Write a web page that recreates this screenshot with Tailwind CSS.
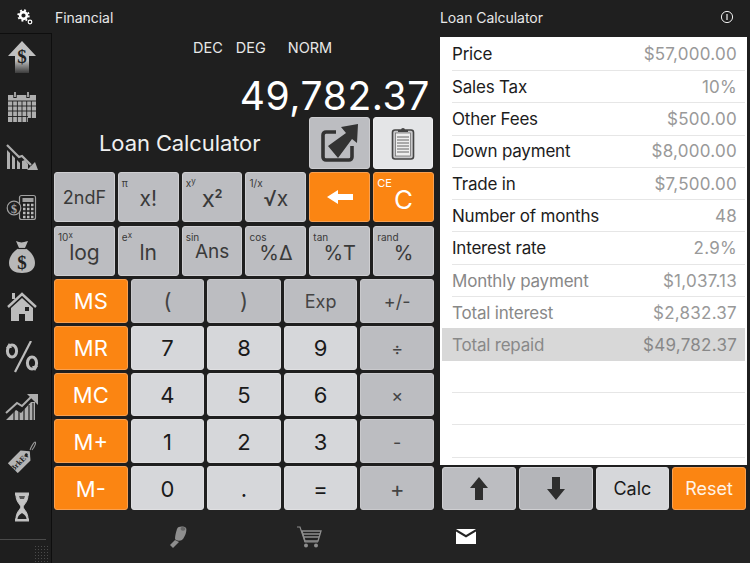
<!DOCTYPE html>
<html><head><meta charset="utf-8"><script src="https://cdn.jsdelivr.net/npm/@tailwindcss/browser@4"></script></head>
<body class="m-0">
<div class="w-[750px] h-[563px] flex flex-col bg-[#1f1f1f] overflow-hidden font-['Inter','Liberation_Sans',sans-serif] text-[#e8e8e8]">
  <!-- header -->
  <div class="h-[34px] flex items-center shrink-0 bg-[#1f1f1f]">
    <div class="w-[55px] flex items-center justify-center pr-[5px] shrink-0">
      <svg width="16" height="16" viewBox="0 0 16 16"><g fill="none" stroke="#fff"><circle cx="6.5" cy="6.5" r="3.4" stroke-width="2.6"/><circle cx="6.5" cy="6.5" r="5.3" stroke-width="1.8" stroke-dasharray="1.9 2.26"/><circle cx="13" cy="13" r="1.8" stroke-width="1.2"/></g></svg>
    </div>
    <div class="w-[385px] text-[14px] tracking-[-0.05px]">Financial</div>
    <div class="flex-1 text-[14px] tracking-[-0.05px]">Loan Calculator</div>
    <svg class="mr-[16px]" width="14" height="14" viewBox="0 0 14 14"><circle cx="7" cy="7" r="5.6" fill="none" stroke="#eee" stroke-width="1"/><path d="M7 4v6" stroke="#eee" stroke-width="1.2"/></svg>
  </div>
  <div class="flex h-[476px] shrink-0">
    <!-- sidebar -->
    <div class="w-[52px] shrink-0 -mt-px border-t border-r border-[#0e0e0e] bg-[#1e1e1e] flex flex-col pt-[7px] gap-[18px] h-[530px] relative z-10">
      <svg width="44" height="32" viewBox="0 0 44 32" class="shrink-0"><defs><linearGradient id="a1" x1="0" x2="0" y1="0" y2="1"><stop offset="0.6" stop-color="#c0c0c0"/><stop offset="1" stop-color="#3c3c3c"/></linearGradient></defs><polygon points="22,0 36,15 29,15 29,32 15,32 15,15 8,15" fill="url(#a1)"/><text x="22" y="22" text-anchor="middle" font-family="Liberation Serif" font-weight="700" font-size="19" fill="#222">$</text></svg>
      <svg width="44" height="32" viewBox="0 0 44 32" class="shrink-0"><path d="M8 4h28v23h-8v4H8z" fill="#aeaeae"/><path d="M8 10h28M8 15h28M8 20h28M8 25.500h20M12.700 10v21M17.400 10v21M22 10v21M26.700 10v21M31.400 10v17" stroke="#1f1f1f" stroke-width="0.9"/><path d="M15 1v6M28 1v6" stroke="#1f1f1f" stroke-width="3.4"/><path d="M15 1v5M28 1v5" stroke="#aaa" stroke-width="1.800"/></svg>
      <svg width="44" height="32" viewBox="0 0 44 32" class="shrink-0"><path d="M7 9l3 3v16H7zM12 14l3 3v11h-3zM17 19l3 3v6h-3zM22 20l3-1 3 4v5h-6zM30 25l2 3h-2z" fill="#aeaeae"/><path d="M7 4l12 12 3-1 9 9" fill="none" stroke="#aeaeae" stroke-width="2.200"/><path d="M38 29H27l8-8z" fill="#aeaeae"/></svg>
      <svg width="44" height="32" viewBox="0 0 44 32" class="shrink-0"><rect x="19.500" y="4.500" width="16" height="24" rx="2" fill="#1f1f1f" stroke="#a0a0a0" stroke-width="1.200"/><rect x="22.500" y="7" width="11" height="4" fill="#a0a0a0"/><path d="M23 14h2.500M27 14h2.500M31 14h2.500M23 18h2.500M27 18h2.500M31 18h2.500M23 22h2.500M27 22h2.500M31 22h2.500M23 26h2.500M27 26h2.500M31 26h2.500" stroke="#bbb" stroke-width="2.500"/><circle cx="14" cy="17" r="6.800" fill="#1f1f1f" stroke="#a0a0a0" stroke-width="1.200"/><text x="14" y="21.500" text-anchor="middle" font-family="Liberation Serif" font-weight="700" font-size="12" fill="#aaa">$</text></svg>
      <svg width="44" height="32" viewBox="0 0 44 32" class="shrink-0"><path d="M16 0c2 1 4 1 5.500 1.500C23 1 25 1 28 0l-3 7c7 4 10 10 10 15 0 7-6 10-13 10S9 29 9 22c0-5 3-11 10-15z" fill="#b8b8b8"/><path d="M18 7.500h8" stroke="#1f1f1f" stroke-width="1.200"/><text x="22" y="28" text-anchor="middle" font-family="Liberation Serif" font-weight="700" font-size="19" fill="#222">$</text></svg>
      <svg width="44" height="32" viewBox="0 0 44 32" class="shrink-0"><path d="M8 16L22 3l14 13" fill="none" stroke="#bcbcbc" stroke-width="2.400"/><rect x="12" y="2" width="3" height="6" fill="#bcbcbc"/><path d="M11 17L22 7l11 10v13h-8v-7h-6v7h-8z" fill="#bcbcbc"/><rect x="25" y="16" width="4" height="4" fill="#1f1f1f"/></svg>
      <svg width="44" height="32" viewBox="0 0 44 32" class="shrink-0"><path d="M31 0L15 31" stroke="#bcbcbc" stroke-width="2.200"/><ellipse cx="12" cy="10" rx="4.600" ry="6" fill="none" stroke="#bcbcbc" stroke-width="3"/><path d="M6 7l3-5 3 5z" fill="#bcbcbc"/><ellipse cx="32" cy="22" rx="4.600" ry="6" fill="none" stroke="#bcbcbc" stroke-width="3"/><path d="M38 25l-3 5-3-5z" fill="#bcbcbc"/></svg>
      <svg width="44" height="32" viewBox="0 0 44 32" class="shrink-0"><path d="M6 29l10-10 5 3 10-11 4 0v18z" fill="#aeaeae"/><path d="M6 24l11-10 5 3 10-10" fill="none" stroke="#1f1f1f" stroke-width="1.500"/><path d="M6 22l11-10 5 3 9-9" fill="none" stroke="#aeaeae" stroke-width="2"/><path d="M27 3h11v11z" fill="#aeaeae"/><path d="M14 18v11M19 20v9M24 18v11M29 14v15M33 12v17" stroke="#1f1f1f" stroke-width="1.200"/></svg>
      <svg width="44" height="32" viewBox="0 0 44 32" class="shrink-0"><g transform="rotate(-45 22 18)"><path d="M9 11h18l6 7-6 7H9z" fill="#b4b4b4"/><circle cx="28" cy="18" r="1.500" fill="#1f1f1f"/><text x="18" y="21" text-anchor="middle" font-family="Liberation Serif" font-weight="700" font-size="8" fill="#222">BrkEv</text></g><path d="M30 9c1-3 4-8 5-8s1 3-3 8" fill="none" stroke="#999" stroke-width="1.100"/></svg>
      <svg width="44" height="32" viewBox="0 0 44 32" class="shrink-0"><path d="M15 3h14M15 29h14" stroke="#c0c0c0" stroke-width="3"/><path d="M16 4c0 7 4 9 5 12-1 3-5 5-5 12h12c0-7-4-9-5-12 1-3 5-5 5-12z" fill="#c4c4c4" stroke="#c4c4c4" stroke-width="1"/><path d="M19 5h6l-1 3h-4z" fill="#555"/><path d="M17.500 28c0-3 3-5 4.500-6 1.500 1 4.500 3 4.500 6z" fill="#222"/></svg>
      <div class="absolute left-0 top-[505px] w-[46px] h-px bg-[#4a4a4a]"></div>
      <div class="absolute left-[34px] top-[511px] w-[15px] h-[17px] bg-[radial-gradient(#4a4a4a_1px,transparent_1px)] bg-[length:3px_3px]"></div>
    </div>
    <!-- calculator -->
    <div class="w-[388px] shrink-0 pl-[2px]">
      <div class="h-[27px] flex items-center text-[14.500px] pl-[139px]">
        <span>DEC</span><span class="ml-[13px]">DEG</span><span class="ml-[22px]">NORM</span>
      </div>
      <div class="h-[56px] pr-[10px] text-right text-[39px] leading-[70px] text-white tracking-[0.6px]">49,782.37</div>
      <div class="h-[52px] flex items-center w-[379px]">
        <div class="flex-1 pl-[45px] text-[22px] text-[#f0f0f0] tracking-[-0.1px]">Loan Calculator</div>
        <div class="flex gap-[3px]">
          <div class="w-[61px] h-[52px] rounded-[3px] bg-[#bcbdc1] border border-[#cdcdd0] flex items-center justify-center">
            <svg width="38" height="38" viewBox="0 0 38 38"><path d="M15 8H5a3 3 0 0 0-3 3v22a3 3 0 0 0 3 3h23a3 3 0 0 0 3-3V22" fill="none" stroke="#333" stroke-width="3.600"/><path d="M37 0L20 3l5 6L7 22l10 12 14-19 5 4z" fill="#333"/></svg>
          </div>
          <div class="w-[60px] h-[52px] rounded-[3px] bg-[#e4e5e7] border border-[#ededef] flex items-center justify-center">
            <svg width="26" height="34" viewBox="0 0 26 34"><rect x="2.500" y="4" width="21" height="29" rx="2.500" fill="#c8c8ca" stroke="#444" stroke-width="1.600"/><rect x="5.500" y="7" width="15" height="23" fill="#eee" stroke="#666" stroke-width="0.700"/><path d="M7 11h12M7 14h12M7 17h12M7 20h12M7 23h12M7 26h12" stroke="#555" stroke-width="0.900"/><path d="M8 6V4h3a2 2 0 0 1 4 0h3v2z" fill="#444"/></svg>
          </div>
        </div>
      </div>
      <div class="mt-[3px] w-[380px] grid grid-cols-6 grid-rows-2 gap-x-[3px] gap-y-[4px] h-[104px] text-[#3a3a3a] text-[21px]">
        <div class="relative flex items-center justify-center rounded-[3px] bg-[#b9babe] border border-[#cfcfd2] text-[18px]">2ndF</div>
        <div class="relative flex items-center justify-center rounded-[3px] bg-[#bcbdc1] border border-[#cfcfd2] pt-[3px]"><span class="absolute left-[3px] top-[3px] text-[10px] leading-[14px]">π</span>x!</div>
        <div class="relative flex items-center justify-center rounded-[3px] bg-[#bcbdc1] border border-[#cfcfd2] pt-[3px]"><span class="absolute left-[3px] top-[3px] text-[10px] leading-[14px]">x<sup class="text-[8px] -top-[3px]">y</sup></span><span class="text-[24px]">x<sup class="text-[12px] font-bold -top-[9px] relative align-baseline">2</sup></span></div>
        <div class="relative flex items-center justify-center rounded-[3px] bg-[#bcbdc1] border border-[#cfcfd2] pt-[3px]"><span class="absolute left-[3px] top-[3px] text-[10px] leading-[14px]">1/x</span>√x</div>
        <div class="flex items-center justify-center rounded-[3px] bg-[#fb8512] border border-[#f9a050]"><svg width="28" height="16" viewBox="0 0 28 16"><path d="M1 8l11-7v4h15v6H12v4z" fill="#fff"/></svg></div>
        <div class="relative flex items-center justify-center rounded-[3px] bg-[#fb8512] border border-[#f9a050] text-white text-[26px] pt-[4px]"><span class="absolute left-[3px] top-[3px] text-[11px] leading-[14px]">CE</span>C</div>
        <div class="relative flex items-center justify-center rounded-[3px] bg-[#bcbdc1] border border-[#cfcfd2] pt-[3px]"><span class="absolute left-[3px] top-[3px] text-[10px] leading-[14px]">10<sup class="text-[8px] -top-[3px]">x</sup></span>log</div>
        <div class="relative flex items-center justify-center rounded-[3px] bg-[#bcbdc1] border border-[#cfcfd2] pt-[3px]"><span class="absolute left-[3px] top-[3px] text-[10px] leading-[14px]">e<sup class="text-[8px] -top-[3px]">x</sup></span>ln</div>
        <div class="relative flex items-center justify-center rounded-[3px] bg-[#bcbdc1] border border-[#cfcfd2] pt-[3px] text-[19px]"><span class="absolute left-[3px] top-[3px] text-[10px] leading-[14px]">sin</span>Ans</div>
        <div class="relative flex items-center justify-center rounded-[3px] bg-[#bcbdc1] border border-[#cfcfd2] pt-[3px] text-[20px]"><span class="absolute left-[3px] top-[3px] text-[10px] leading-[14px]">cos</span>%Δ</div>
        <div class="relative flex items-center justify-center rounded-[3px] bg-[#bcbdc1] border border-[#cfcfd2] pt-[3px] text-[20px]"><span class="absolute left-[3px] top-[3px] text-[10px] leading-[14px]">tan</span>%T</div>
        <div class="relative flex items-center justify-center rounded-[3px] bg-[#bcbdc1] border border-[#cfcfd2] pt-[3px] text-[20px]"><span class="absolute left-[3px] top-[3px] text-[10px] leading-[14px]">rand</span>%</div>
      </div>
      <div class="mt-[3px] w-[380px] h-[231px] grid grid-cols-5 grid-rows-5 gap-[3px] text-[22px] text-[#1a1a1a] [&>div]:pt-[2px]">
        <div class="flex items-center justify-center rounded-[3px] bg-[#fb8512] border border-[#f9a050] text-white">MS</div>
        <div class="flex items-center justify-center rounded-[3px] bg-[#bcbdc1] border border-[#c9c9cc] text-[#444]">(</div>
        <div class="flex items-center justify-center rounded-[3px] bg-[#bcbdc1] border border-[#c9c9cc] text-[#444]">)</div>
        <div class="flex items-center justify-center rounded-[3px] bg-[#bcbdc1] border border-[#c9c9cc] text-[#444] text-[18px]">Exp</div>
        <div class="flex items-center justify-center rounded-[3px] bg-[#bcbdc1] border border-[#c9c9cc] text-[#444] text-[18px]">+/-</div>
        <div class="flex items-center justify-center rounded-[3px] bg-[#fb8512] border border-[#f9a050] text-white">MR</div>
        <div class="flex items-center justify-center rounded-[3px] bg-[#d6d7da] border border-[#dfdfe1]">7</div>
        <div class="flex items-center justify-center rounded-[3px] bg-[#d6d7da] border border-[#dfdfe1]">8</div>
        <div class="flex items-center justify-center rounded-[3px] bg-[#d6d7da] border border-[#dfdfe1]">9</div>
        <div class="flex items-center justify-center rounded-[3px] bg-[#bcbdc1] border border-[#c9c9cc] text-[#444] text-[18px]">÷</div>
        <div class="flex items-center justify-center rounded-[3px] bg-[#fb8512] border border-[#f9a050] text-white">MC</div>
        <div class="flex items-center justify-center rounded-[3px] bg-[#d6d7da] border border-[#dfdfe1]">4</div>
        <div class="flex items-center justify-center rounded-[3px] bg-[#d6d7da] border border-[#dfdfe1]">5</div>
        <div class="flex items-center justify-center rounded-[3px] bg-[#d6d7da] border border-[#dfdfe1]">6</div>
        <div class="flex items-center justify-center rounded-[3px] bg-[#bcbdc1] border border-[#c9c9cc] text-[#444] text-[18px]">×</div>
        <div class="flex items-center justify-center rounded-[3px] bg-[#fb8512] border border-[#f9a050] text-white">M+</div>
        <div class="flex items-center justify-center rounded-[3px] bg-[#d6d7da] border border-[#dfdfe1]">1</div>
        <div class="flex items-center justify-center rounded-[3px] bg-[#d6d7da] border border-[#dfdfe1]">2</div>
        <div class="flex items-center justify-center rounded-[3px] bg-[#d6d7da] border border-[#dfdfe1]">3</div>
        <div class="flex items-center justify-center rounded-[3px] bg-[#bcbdc1] border border-[#c9c9cc] text-[#444] text-[18px]">-</div>
        <div class="flex items-center justify-center rounded-[3px] bg-[#fb8512] border border-[#f9a050] text-white">M-</div>
        <div class="flex items-center justify-center rounded-[3px] bg-[#d6d7da] border border-[#dfdfe1]">0</div>
        <div class="flex items-center justify-center rounded-[3px] bg-[#d6d7da] border border-[#dfdfe1]">.</div>
        <div class="flex items-center justify-center rounded-[3px] bg-[#d6d7da] border border-[#dfdfe1]">=</div>
        <div class="flex items-center justify-center rounded-[3px] bg-[#bcbdc1] border border-[#c9c9cc] text-[#444]">+</div>
      </div>
    </div>
    <!-- right panel -->
    <div class="flex-1 flex flex-col">
      <div class="mt-[3px] w-[307px] h-[428px] bg-white flex flex-col px-[2px] text-[17px] text-[#1c1c1c] tracking-[-0.2px] [&>div]:pt-[3px] [&_span+span]:tracking-[0.25px]">
        <div class="h-[33px] flex items-center justify-between pl-[10px] pr-[8px]"><span>Price</span><span class="text-[#999]">$57,000.00</span></div>
        <div class="h-[32.300px] flex items-center justify-between pl-[10px] pr-[8px] relative before:absolute before:top-0 before:left-[10px] before:right-0 before:h-px before:bg-[#e6e6e6]"><span>Sales Tax</span><span class="text-[#999]">10%</span></div>
        <div class="h-[32.300px] flex items-center justify-between pl-[10px] pr-[8px] relative before:absolute before:top-0 before:left-[10px] before:right-0 before:h-px before:bg-[#e6e6e6]"><span>Other Fees</span><span class="text-[#999]">$500.00</span></div>
        <div class="h-[32.300px] flex items-center justify-between pl-[10px] pr-[8px] relative before:absolute before:top-0 before:left-[10px] before:right-0 before:h-px before:bg-[#e6e6e6]"><span>Down payment</span><span class="text-[#999]">$8,000.00</span></div>
        <div class="h-[32.300px] flex items-center justify-between pl-[10px] pr-[8px] relative before:absolute before:top-0 before:left-[10px] before:right-0 before:h-px before:bg-[#e6e6e6]"><span>Trade in</span><span class="text-[#999]">$7,500.00</span></div>
        <div class="h-[32.300px] flex items-center justify-between pl-[10px] pr-[8px] relative before:absolute before:top-0 before:left-[10px] before:right-0 before:h-px before:bg-[#e6e6e6]"><span>Number of months</span><span class="text-[#999]">48</span></div>
        <div class="h-[32.300px] flex items-center justify-between pl-[10px] pr-[8px] relative before:absolute before:top-0 before:left-[10px] before:right-0 before:h-px before:bg-[#e6e6e6]"><span>Interest rate</span><span class="text-[#999]">2.9%</span></div>
        <div class="h-[32.300px] flex items-center justify-between pl-[10px] pr-[8px] relative before:absolute before:top-0 before:left-[10px] before:right-0 before:h-px before:bg-[#e6e6e6] text-[#888]"><span>Monthly payment</span><span class="text-[#999]">$1,037.13</span></div>
        <div class="h-[32.300px] flex items-center justify-between pl-[10px] pr-[8px] relative before:absolute before:top-0 before:left-[10px] before:right-0 before:h-px before:bg-[#e6e6e6] text-[#888]"><span>Total interest</span><span class="text-[#999]">$2,832.37</span></div>
        <div class="h-[32.300px] flex items-center justify-between pl-[10px] pr-[8px] bg-[#d8d8d8] text-[#888]"><span>Total repaid</span><span>$49,782.37</span></div>
        <div class="h-[32.300px] border-b border-[#e6e6e6] ml-[10px]"></div>
        <div class="h-[32.300px] border-b border-[#e6e6e6] ml-[10px]"></div>
        <div class="h-[32.300px] border-b border-[#e6e6e6] ml-[10px]"></div>
      </div>
      <div class="mt-[2px] ml-[2px] w-[304px] h-[43px] grid grid-cols-4 gap-[3px] text-[18px] text-[#1a1a1a]">
        <div class="flex items-center justify-center rounded-[3px] bg-[#bcbdc1] border border-[#cfcfd2]"><svg width="18" height="23" viewBox="0 0 18 23"><path d="M9 0l9 11h-5v12H5V11H0z" fill="#2e2e2e"/></svg></div>
        <div class="flex items-center justify-center rounded-[3px] bg-[#b4b5b9] border border-[#cfcfd2]"><svg width="18" height="23" viewBox="0 0 18 23"><path d="M9 23L0 12h5V0h8v12h5z" fill="#2e2e2e"/></svg></div>
        <div class="flex items-center justify-center rounded-[3px] bg-[#d6d7da] border border-[#dfdfe1]">Calc</div>
        <div class="flex items-center justify-center rounded-[3px] bg-[#fb8512] border border-[#f9a050] text-[#fff3e6]">Reset</div>
      </div>
    </div>
  </div>
  <!-- footer -->
  <div class="flex-1 flex bg-[#232323] relative">
    <div class="w-[52px] shrink-0"></div>
    <div class="w-[388px] shrink-0 flex items-center pl-[117px] gap-[109px]">
      <svg width="18" height="22" viewBox="0 0 18 22"><path d="M8 3c1-3 7-3 9-1 1 1 0 8-4 12-2 1-6 1-7-1 0-3 1-7 2-10z" fill="#8e8e8e"/><path d="M13 1c3 0 4 1 3 3-1 1-3 1-4 0s0-3 1-3z" fill="#666"/><path d="M6 14l-5 5 3 3 6-6z" fill="#8e8e8e"/></svg>
      <svg width="26" height="22" viewBox="0 0 26 22"><path d="M1 1h3l5 15h13" fill="none" stroke="#8e8e8e" stroke-width="1.200"/><path d="M6 5h19l-3 10H9z" fill="none" stroke="#8e8e8e" stroke-width="1.300"/><path d="M7 8h17M8 11h15" stroke="#8e8e8e" stroke-width="1.300"/><circle cx="10" cy="19.500" r="2" fill="#8e8e8e"/><circle cx="20" cy="19.500" r="2" fill="#8e8e8e"/></svg>
    </div>
    <div class="flex-1 flex items-center pl-[16px]">
      <svg width="20" height="15" viewBox="0 0 20 15"><path d="M0 0h20L10 6z" fill="#fff"/><path d="M0 2.500l10 6 10-6V15H0z" fill="#fff"/></svg>
    </div>
  </div>
</div>
</body></html>
